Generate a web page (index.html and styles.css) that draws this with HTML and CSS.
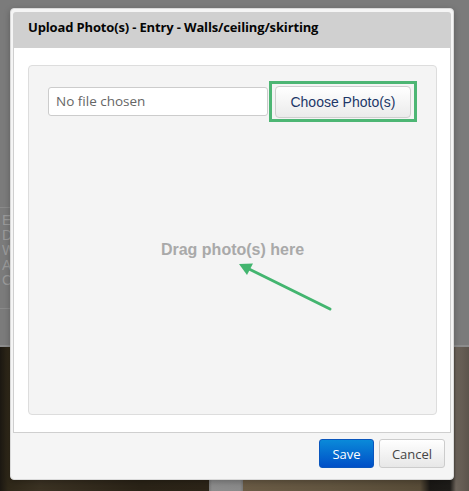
FILE: index.html
```html
<!DOCTYPE html>
<html lang="en">
<head>
  <meta charset="UTF-8" />
  <meta name="viewport" content="width=device-width, initial-scale=1.0"/>
  <title>Upload Photo(s)</title>
  <link rel="stylesheet" href="styles.css">
</head>
<body>

  <!-- page behind the dialog -->
  <div class="page">
    <div class="page-top">
      <div class="room-list">
        <div>Entry</div>
        <div>Doors</div>
        <div>Walls</div>
        <div>ALL</div>
        <div>Ceiling</div>
      </div>
    </div>
    <div class="photo"></div>
  </div>

  <!-- upload dialog -->
  <div class="modal">
    <div class="modal-header">Upload Photo(s) - Entry - Walls/ceiling/skirting</div>

    <div class="modal-body">
      <div class="dropzone">
        <div class="file-row">
          <div class="file-name">No file chosen</div>
          <div class="highlight">
            <button type="button" class="btn-choose">Choose Photo(s)</button>
          </div>
        </div>

        <div class="drag-text">Drag photo(s) here</div>

        <svg class="arrow" width="406" height="348" viewBox="0 0 406 348">
          <line x1="301" y1="243" x2="219" y2="202.5" stroke="#43b56f" stroke-width="3" stroke-linecap="round"/>
          <polygon points="210,198 224,197.5 218,209" fill="#43b56f"/>
        </svg>
      </div>
    </div>

    <div class="modal-footer">
      <button type="button" class="btn btn-save">Save</button>
      <button type="button" class="btn btn-cancel">Cancel</button>
    </div>
  </div>

</body>
</html>
```

FILE: styles.css
```css
* {
  box-sizing: border-box;
}

body {
  margin: 0;
  padding: 0;
  width: 469px;
  height: 491px;
  overflow: hidden;
  position: relative;
  background: #7b7b7b;
  font-family: 'Open Sans', Arial, sans-serif;
}

/* background page */
.page-top {
  height: 347px;
  border-bottom: 2px solid #8c8c8c;
  padding-top: 207px;
}

.room-list {
  width: 60px;
  height: 102px;
  border-top: 1px solid #8a8a8a;
  border-bottom: 1px solid #8a8a8a;
  padding: 5px 0 0 2px;
  font-family: 'Liberation Sans', Arial, sans-serif;
  font-size: 14px;
  line-height: 15px;
  color: #9a9a9a;
}

.photo {
  height: 144px;
  background:
    linear-gradient(90deg,
      #1b1711 0, #2f2819 8px, #3b3223 40px, #2a2317 140px, #2c2418 209px,
      #777 209px, #8c8c8c 212px, #8a8a8a 240px, #777 243px,
      #6a5b45 243px, #625540 330px, #584c38 420px, #1a1815 430px,
      #1e1c19 450px, #6d645b 456px, #5c544c 469px);
}

/* dialog */
.modal {
  position: absolute;
  top: 8px;
  left: 10px;
  width: 444px;
  background: #f5f5f5;
  border: 1px solid #dadada;
  border-radius: 4px;
  padding: 3px 2px 0;
  box-shadow: 0 2px 6px rgba(0, 0, 0, 0.25);
}

.modal-header {
  height: 36px;
  background: #d0d0d0;
  border-radius: 3px 3px 0 0;
  padding: 6px 15px 0;
  font-size: 13px;
  font-weight: bold;
  line-height: 18px;
  letter-spacing: -0.15px;
  color: #050505;
}

.modal-body {
  background: #fff;
  border: 1px solid #cfcfcf;
  border-top: none;
  padding: 17px 13px 17px 14px;
}

.dropzone {
  position: relative;
  height: 350px;
  background: #f4f4f4;
  border: 1px solid #dddddd;
  border-radius: 4px;
  padding: 15px 0 0 19px;
}

.file-row {
  display: flex;
  align-items: center;
  gap: 1px;
}

.file-name {
  width: 220px;
  height: 29px;
  background: #fff;
  border: 1px solid #cccccc;
  border-radius: 3px;
  padding-left: 7px;
  font-size: 13.5px;
  line-height: 27px;
  color: #666;
}

.highlight {
  border: 3px solid #4db674;
  padding: 2px 3px 1px;
}

.btn-choose {
  display: block;
  width: 136px;
  height: 32px;
  border: 1px solid #cfcfcf;
  border-radius: 4px;
  background: linear-gradient(#ffffff, #ebebeb);
  font-family: 'Liberation Sans', Arial, sans-serif;
  font-size: 14px;
  color: #1d3768;
  padding: 0;
}

.drag-text {
  margin: 119px 0 0 -19px;
  text-align: center;
  font-family: 'Liberation Sans', Arial, sans-serif;
  font-size: 16px;
  font-weight: bold;
  line-height: 18px;
  color: #a9a9a9;
}

.arrow {
  position: absolute;
  top: 0;
  left: 0;
}

.modal-footer {
  display: flex;
  justify-content: flex-end;
  gap: 5px;
  padding: 6px 6px 11px;
}

.btn {
  height: 29px;
  border-radius: 3px;
  font-family: 'Open Sans', Arial, sans-serif;
  font-size: 13px;
  padding: 0;
}

.btn-save {
  width: 55px;
  border: 1px solid #0a56bd;
  background: linear-gradient(#0a8ad9, #004fc7);
  color: #fff;
}

.btn-cancel {
  width: 66px;
  border: 1px solid #cccccc;
  background: linear-gradient(#ffffff, #e7e7e7);
  color: #444;
}
```
